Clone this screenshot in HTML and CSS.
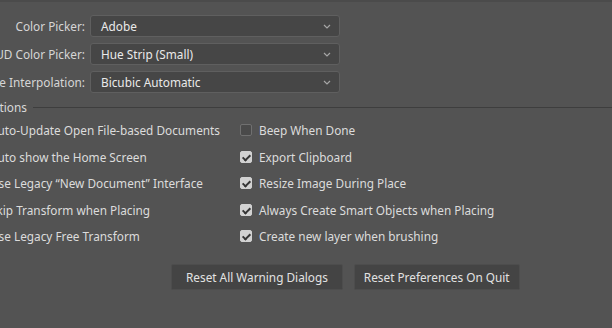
FILE: index.html
```html
<!DOCTYPE html>
<html lang="en">
<head>
    <meta charset="UTF-8">
    <title>Preferences - General</title>
    <link rel="stylesheet" href="styles.css">
</head>
<body>
    <div class="prefs">
        <div class="fields">
            <div class="field">
                <label class="field-label">Color Picker:</label>
                <div class="select"><span>Adobe</span><svg class="chevron" width="8" height="5" viewBox="0 0 8 5"><path d="M1 1l3 3 3-3" fill="none" stroke="#a6a6a6" stroke-width="1.2"/></svg></div>
            </div>
            <div class="field">
                <label class="field-label">HUD Color Picker:</label>
                <div class="select"><span>Hue Strip (Small)</span><svg class="chevron" width="8" height="5" viewBox="0 0 8 5"><path d="M1 1l3 3 3-3" fill="none" stroke="#a6a6a6" stroke-width="1.2"/></svg></div>
            </div>
            <div class="field">
                <label class="field-label">Image Interpolation:</label>
                <div class="select"><span>Bicubic Automatic</span><svg class="chevron" width="8" height="5" viewBox="0 0 8 5"><path d="M1 1l3 3 3-3" fill="none" stroke="#a6a6a6" stroke-width="1.2"/></svg></div>
            </div>
        </div>

        <div class="group-title">
            <span>Options</span>
            <div class="group-line"></div>
        </div>

        <div class="options">
            <div class="option"><span class="box checked"></span>Auto-Update Open File-based Documents</div>
            <div class="option"><span class="box"></span>Beep When Done</div>
            <div class="option"><span class="box checked"></span>Auto show the Home Screen</div>
            <div class="option"><span class="box checked"></span>Export Clipboard</div>
            <div class="option"><span class="box"></span>Use Legacy “New Document” Interface</div>
            <div class="option"><span class="box checked"></span>Resize Image During Place</div>
            <div class="option"><span class="box"></span>Skip Transform when Placing</div>
            <div class="option"><span class="box checked"></span>Always Create Smart Objects when Placing</div>
            <div class="option"><span class="box"></span>Use Legacy Free Transform</div>
            <div class="option"><span class="box checked"></span>Create new layer when brushing</div>
        </div>

        <div class="actions">
            <button class="btn">Reset All Warning Dialogs</button>
            <button class="btn btn-narrow">Reset Preferences On Quit</button>
        </div>
    </div>
</body>
</html>
```
FILE: styles.css
```css
* {
    margin: 0;
    padding: 0;
    box-sizing: border-box;
}

body {
    background: #535353;
    color: #d9d9d9;
    font-family: 'Noto Sans', sans-serif;
    font-size: 11.8px;
    overflow: hidden;
    border-top: 2px solid #4b4b4b;
}

.prefs {
    margin-left: -40px;
    width: 652px;
    padding-top: 13px;
}

.fields {
    display: flex;
    flex-direction: column;
    gap: 6px;
}

.field {
    display: flex;
    align-items: center;
    gap: 5px;
    height: 22px;
}

.field-label {
    width: 125px;
    text-align: right;
    color: #d6d6d6;
}

.select {
    width: 250px;
    height: 22px;
    display: flex;
    align-items: center;
    justify-content: space-between;
    padding: 0 8px 0 10px;
    background: #464646;
    border: 1px solid #5f5f5f;
    border-radius: 3px;
    color: #eaeaea;
}

.chevron {
    display: block;
}

.group-title {
    display: flex;
    align-items: center;
    height: 14px;
    margin-top: 7px;
    padding-left: 23px;
}

.group-line {
    flex: 1;
    height: 1px;
    background: #3e3e3e;
    margin-left: 6px;
}

.options {
    display: grid;
    grid-template-columns: 269px 1fr;
    grid-auto-rows: 26.5px;
    margin-top: 3px;
    padding-left: 11px;
}

.option {
    display: flex;
    align-items: center;
    color: #dcdcdc;
}

.box {
    width: 12px;
    height: 12px;
    margin-right: 7px;
    border: 1px solid #707070;
    border-radius: 2px;
    background: #4a4a4a;
    position: relative;
}

.box.checked {
    background: #d2d2d2;
    border-color: #d2d2d2;
}

.box.checked::after {
    content: '';
    position: absolute;
    left: 3px;
    top: 1px;
    width: 3px;
    height: 6px;
    border: solid #353535;
    border-width: 0 2px 2px 0;
    transform: rotate(45deg);
}

.actions {
    display: flex;
    gap: 11px;
    margin-top: 14px;
    padding-left: 211px;
}

.btn {
    height: 26px;
    padding: 0 14px;
    background: #444444;
    border: 1px solid #4d4d4d;
    border-radius: 2px;
    color: #e2e2e2;
    font-family: 'Noto Sans', sans-serif;
    font-size: 11.8px;
}

.btn-narrow {
    padding: 0 9px;
}
```
